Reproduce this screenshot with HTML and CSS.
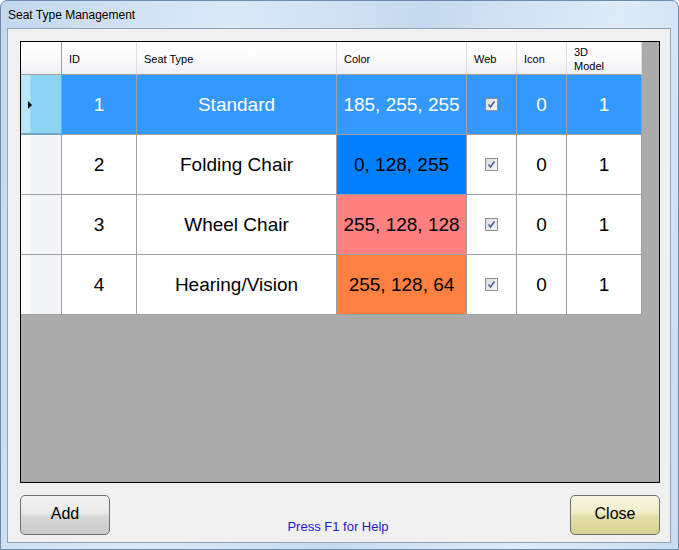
FILE: index.html
```html
<!DOCTYPE html>
<html>
<head>
<meta charset="utf-8">
<link rel="stylesheet" href="styles.css">
</head>
<body>
<div class="window">
  <div class="titlebar">Seat Type Management</div>
  <div class="client">
    <div class="grid">
      <div class="table">
        <div class="hcell corner"></div>
        <div class="hcell">ID</div>
        <div class="hcell">Seat Type</div>
        <div class="hcell">Color</div>
        <div class="hcell">Web</div>
        <div class="hcell">Icon</div>
        <div class="hcell">3D<br>Model</div>

        <div class="rhead sel"><span class="arrow"></span></div>
        <div class="cell sel">1</div>
        <div class="cell sel">Standard</div>
        <div class="cell sel">185, 255, 255</div>
        <div class="cell sel"><span class="chk"><svg viewBox="0 0 11 11" width="11" height="11"><path d="M2.5 5.5 L4.5 8 L8.5 2.5" fill="none" stroke="#4b5f9a" stroke-width="1.6"/></svg></span></div>
        <div class="cell sel">0</div>
        <div class="cell sel">1</div>

        <div class="rhead"></div>
        <div class="cell">2</div>
        <div class="cell">Folding Chair</div>
        <div class="cell c-blue">0, 128, 255</div>
        <div class="cell"><span class="chk"><svg viewBox="0 0 11 11" width="11" height="11"><path d="M2.5 5.5 L4.5 8 L8.5 2.5" fill="none" stroke="#4b5f9a" stroke-width="1.6"/></svg></span></div>
        <div class="cell">0</div>
        <div class="cell">1</div>

        <div class="rhead"></div>
        <div class="cell">3</div>
        <div class="cell">Wheel Chair</div>
        <div class="cell c-pink">255, 128, 128</div>
        <div class="cell"><span class="chk"><svg viewBox="0 0 11 11" width="11" height="11"><path d="M2.5 5.5 L4.5 8 L8.5 2.5" fill="none" stroke="#4b5f9a" stroke-width="1.6"/></svg></span></div>
        <div class="cell">0</div>
        <div class="cell">1</div>

        <div class="rhead"></div>
        <div class="cell">4</div>
        <div class="cell">Hearing/Vision</div>
        <div class="cell c-orange">255, 128, 64</div>
        <div class="cell"><span class="chk"><svg viewBox="0 0 11 11" width="11" height="11"><path d="M2.5 5.5 L4.5 8 L8.5 2.5" fill="none" stroke="#4b5f9a" stroke-width="1.6"/></svg></span></div>
        <div class="cell">0</div>
        <div class="cell">1</div>
      </div>
    </div>
    <div class="bottom">
      <button class="btn">Add</button>
      <div class="help">Press F1 for Help</div>
      <button class="btn close">Close</button>
    </div>
  </div>
</div>
</body>
</html>
```

FILE: styles.css
```css
html, body {
  margin: 0;
  padding: 0;
}
body {
  width: 679px;
  height: 550px;
  overflow: hidden;
  font-family: "Liberation Sans", Arial, sans-serif;
}
.window {
  width: 679px;
  height: 550px;
  box-sizing: border-box;
  background: linear-gradient(100deg, #c3d8ee 0%, #dce9f7 30%, #c6daef 55%, #dfebf7 80%, #c8dcf0 100%);
  border: 1px solid #6f8aab;
  border-radius: 7px 7px 0 0;
  display: flex;
  flex-direction: column;
}
.titlebar {
  height: 27px;
  box-sizing: border-box;
  padding: 7px 0 0 7px;
  font-size: 12px;
  color: #000;
  font-family: "Liberation Sans", Arial, sans-serif;
}
.client {
  margin: 0 7px 0 6px;
  height: 515px;
  box-sizing: border-box;
  border: 1px solid #8fa3bb;
  background: #f0f0f0;
  padding: 12px 10px 6px 12px;
  display: flex;
  flex-direction: column;
}
.grid {
  width: 640px;
  height: 442px;
  box-sizing: border-box;
  border: 1px solid #000;
  background: #ababab;
}
.table {
  display: grid;
  grid-template-columns: 41px 75px 200px 130px 50px 50px 75px;
  grid-template-rows: 33px 60px 60px 60px 60px;
  width: 621px;
}
.hcell {
  box-sizing: border-box;
  background: linear-gradient(#ffffff 0%, #fbfbfc 50%, #eff0f2 100%);
  border-right: 1px solid #dcdddf;
  border-bottom: 1px solid #a0a0a0;
  font-size: 11px;
  line-height: 14px;
  color: #000;
  padding-left: 7px;
  padding-top: 1px;
  display: flex;
  align-items: center;
}
.hcell.corner {
  border-right: 1px solid #a0a0a0;
}
.rhead {
  box-sizing: border-box;
  background: linear-gradient(90deg, #fbfbfc 0%, #fbfbfc 22%, #f3f4f5 25%, #f3f4f5 100%);
  border-right: 1px solid #a0a0a0;
  border-bottom: 1px solid #a0a0a0;
  position: relative;
}
.rhead.sel {
  background: linear-gradient(90deg, #b9e6fb 0%, #b9e6fb 22%, #8dd3f4 25%, #8dd3f4 100%);
  border-bottom: 2px solid #6fa7c5;
}
.arrow {
  position: absolute;
  left: 7px;
  top: 26px;
  width: 0;
  height: 0;
  border-top: 4px solid transparent;
  border-bottom: 4px solid transparent;
  border-left: 4px solid #000;
}
.cell {
  box-sizing: border-box;
  border-right: 1px solid #a0a0a0;
  border-bottom: 1px solid #a0a0a0;
  background: #fff;
  font-size: 19px;
  color: #000;
  display: flex;
  align-items: center;
  justify-content: center;
}
.cell.sel {
  background: #3399ff;
  color: #fff;
}
.cell.c-blue { background: rgb(0, 128, 255); }
.cell.c-pink { background: rgb(255, 128, 128); }
.cell.c-orange { background: rgb(255, 128, 64); }
.chk {
  width: 13px;
  height: 13px;
  box-sizing: border-box;
  border: 1px solid #8f8f8f;
  background: linear-gradient(135deg, #dcdcdc, #f6f6f6);
  display: flex;
  align-items: center;
  justify-content: center;
}
.chk svg {
  display: block;
}
.bottom {
  margin-top: 12px;
  display: flex;
  align-items: flex-start;
  justify-content: space-between;
  height: 40px;
}
.btn {
  width: 90px;
  height: 40px;
  box-sizing: border-box;
  border: 1px solid #707070;
  border-radius: 5px;
  background: linear-gradient(#f4f4f4 0%, #e8e8e8 45%, #d6d6d6 55%, #c9c9c9 100%);
  font-family: "Liberation Sans", Arial, sans-serif;
  font-size: 16px;
  color: #000;
  padding: 0 0 2px 0;
}
.btn.close {
  background: linear-gradient(#f8f7e4 0%, #efecc6 45%, #e2dea8 55%, #d6d193 100%);
}
.help {
  align-self: flex-end;
  font-size: 13px;
  color: #1c1ccc;
  padding-bottom: 1px;
  margin-right: 4px;
}
```
